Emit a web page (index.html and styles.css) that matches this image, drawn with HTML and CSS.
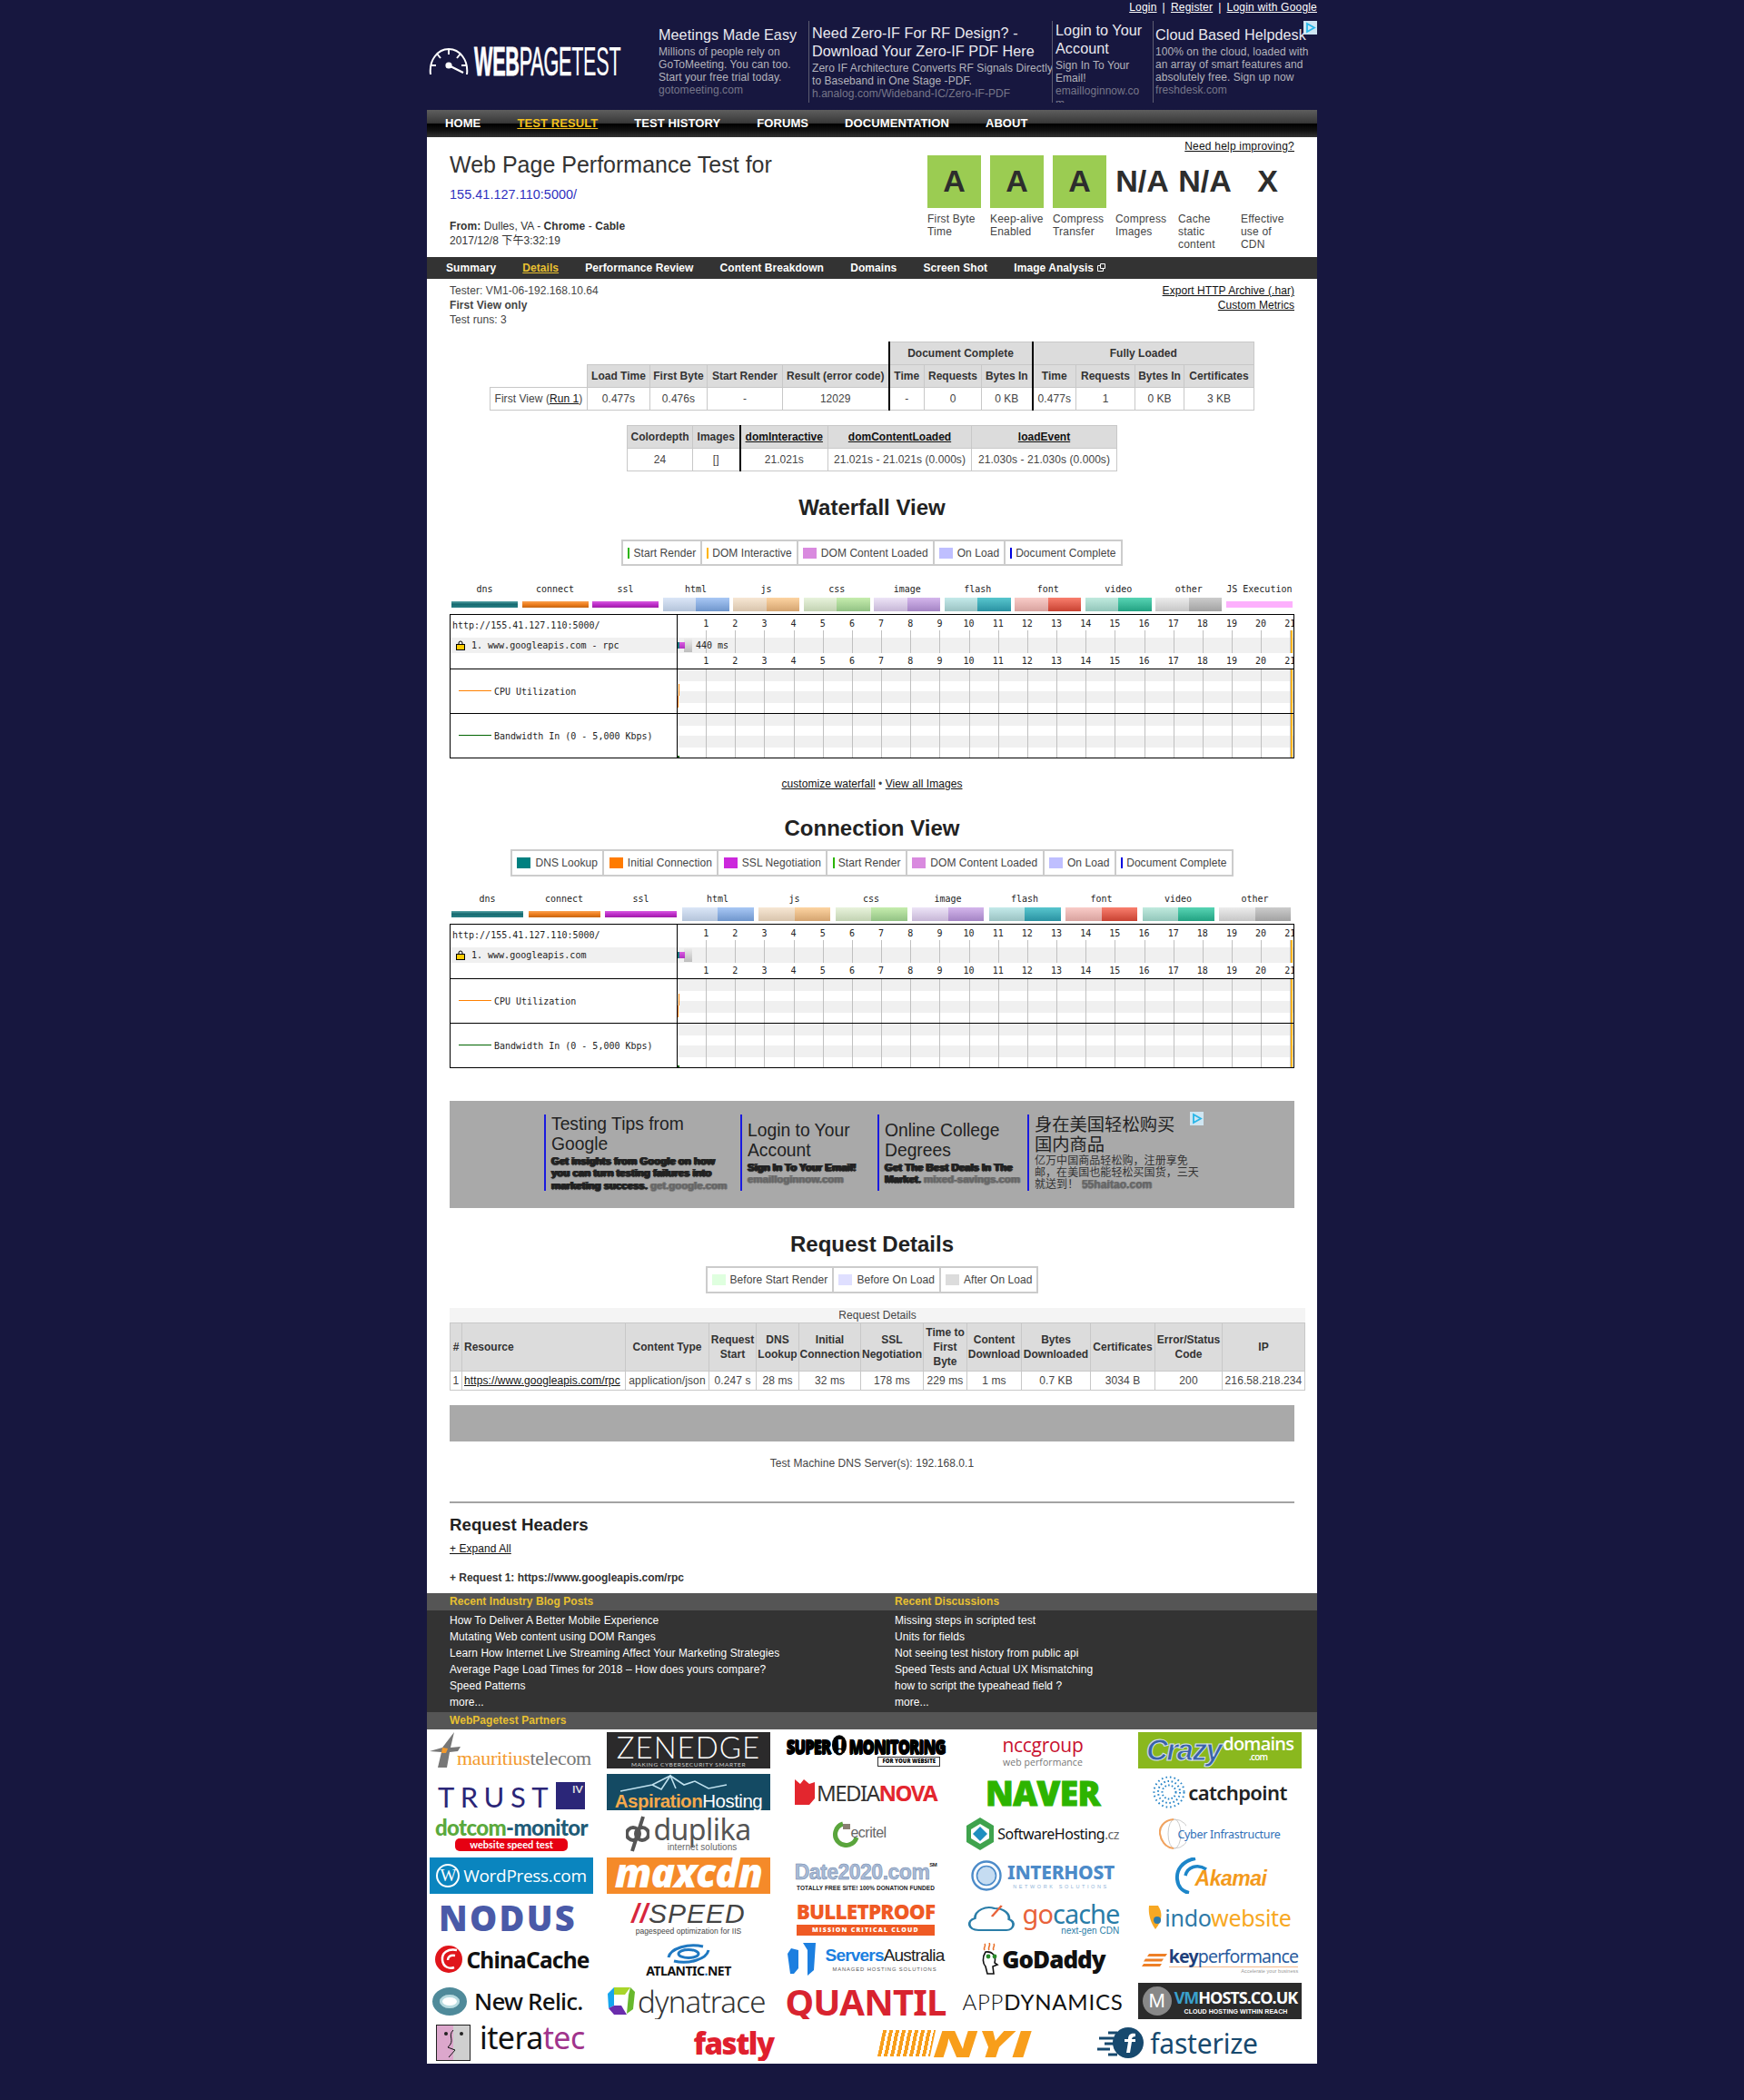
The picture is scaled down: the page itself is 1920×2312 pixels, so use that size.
FILE: index.html
```html
<!DOCTYPE html>
<html lang="en">
<head>
    <meta charset="UTF-8">
    <title>WebPagetest - Details</title>
    <link rel="stylesheet" href="styles.css">
    <script src="script.js" defer></script>
</head>
<body>
<div class="page">
    <div class="toplinks"><a>Login</a><span>|</span><a>Register</a><span>|</span><a>Login with Google</a></div>

    <div class="header">
        <div class="brand">
            <svg class="gauge" width="44" height="32" viewBox="0 0 44 32" fill="none" stroke="#fff" stroke-width="2">
                <path d="M2 30C0 14 10 2 22 2s22 12 20 28"/>
                <path d="M22 2v6M9 7l4 5M35 7l-4 5M2 20h6M36 20h6"/>
                <circle cx="22" cy="20" r="2.6" fill="#fff"/>
                <path d="M22 20l16 8" stroke-width="2.4"/>
            </svg>
            <div class="wordmark"><span class="wm-a">WEB</span><span class="wm-b">PAGE</span><span class="wm-c">TEST</span></div>
        </div>
        <div class="ad ad1">
            <div class="ad-title">Meetings Made Easy</div>
            <div class="ad-body">Millions of people rely on<br>GoToMeeting. You can too.<br>Start your free trial today.<br><span class="ad-url">gotomeeting.com</span></div>
        </div>
        <div class="ad ad2">
            <div class="ad-title">Need Zero-IF For RF Design? -<br>Download Your Zero-IF PDF Here</div>
            <div class="ad-body nowrap">Zero IF Architecture Converts RF Signals Directly<br>to Baseband in One Stage -PDF.<br><span class="ad-url">h.analog.com/Wideband-IC/Zero-IF-PDF</span></div>
        </div>
        <div class="ad ad3">
            <div class="ad-title">Login to Your<br>Account</div>
            <div class="ad-body">Sign In To Your<br>Email!<br><span class="ad-url">emailloginnow.co<br>m</span></div>
        </div>
        <div class="ad ad4">
            <div class="ad-title">Cloud Based Helpdesk</div>
            <div class="ad-body">100% on the cloud, loaded with<br>an array of smart features and<br>absolutely free. Sign up now<br><span class="ad-url">freshdesk.com</span></div>
        </div>
        <svg class="adchoice adchoice-top" width="15" height="15" viewBox="0 0 15 15"><rect width="15" height="15" fill="#cfe6f2"/><path d="M4 3l8 4.5L4 12z" fill="none" stroke="#29b6e8" stroke-width="1.8"/></svg>
    </div>

    <div class="nav">
        <a>HOME</a><a class="on">TEST RESULT</a><a>TEST HISTORY</a><a>FORUMS</a><a>DOCUMENTATION</a><a>ABOUT</a>
    </div>

    <div class="hero">
        <div class="hero-left">
            <h1>Web Page Performance Test for</h1>
            <div class="test-url">155.41.127.110:5000/</div>
            <div class="from"><b>From:</b> Dulles, VA - <b>Chrome</b> - <b>Cable</b></div>
            <div class="from">2017/12/8 下午3:32:19</div>
        </div>
        <div class="hero-right">
            <div class="help"><a>Need help improving?</a></div>
            <div class="grades">
                <div class="grade"><div class="mark pass">A</div><div class="mark-name">First Byte Time</div></div>
                <div class="grade"><div class="mark pass">A</div><div class="mark-name">Keep-alive Enabled</div></div>
                <div class="grade"><div class="mark pass">A</div><div class="mark-name">Compress Transfer</div></div>
                <div class="grade"><div class="mark">N/A</div><div class="mark-name">Compress Images</div></div>
                <div class="grade"><div class="mark">N/A</div><div class="mark-name">Cache<br>static<br>content</div></div>
                <div class="grade"><div class="mark">X</div><div class="mark-name">Effective<br>use of<br>CDN</div></div>
            </div>
        </div>
    </div>

    <div class="subnav">
        <a>Summary</a><a class="on">Details</a><a>Performance Review</a><a>Content Breakdown</a><a>Domains</a><a>Screen Shot</a>
        <a>Image Analysis <svg width="9" height="10" viewBox="0 0 9 10" fill="none" stroke="#fff"><path d="M3.5 1.5h5v5h-5zM3 3.5H.5v6h6V7"/></svg></a>
    </div>

    <div class="content">
        <div class="info">
            <div>Tester: VM1-06-192.168.10.64<br><b>First View only</b><br>Test runs: 3</div>
            <div class="info-right"><a>Export HTTP Archive (.har)</a><br><a>Custom Metrics</a></div>
        </div>

        <table class="data summary">
            <colgroup><col class="w107"><col class="w69"><col class="w63"><col class="w83"><col class="w117"><col class="w39"><col class="w63"><col class="w56"><col class="w48"><col class="w65"><col class="w54"><col class="w77"></colgroup>
            <tr><td class="blank" colspan="5"></td><th class="sep" colspan="3">Document Complete</th><th class="sep" colspan="4">Fully Loaded</th></tr>
            <tr><td class="blank"></td><th>Load Time</th><th>First Byte</th><th>Start Render</th><th>Result (error code)</th><th class="sep">Time</th><th>Requests</th><th>Bytes In</th><th class="sep">Time</th><th>Requests</th><th>Bytes In</th><th>Certificates</th></tr>
            <tr><td>First View (<a>Run 1</a>)</td><td>0.477s</td><td>0.476s</td><td>-</td><td>12029</td><td class="sep">-</td><td>0</td><td>0 KB</td><td class="sep">0.477s</td><td>1</td><td>0 KB</td><td>3 KB</td></tr>
        </table>

        <table class="data extra">
            <colgroup><col class="w72"><col class="w52"><col class="w97"><col class="w158"><col class="w160"></colgroup>
            <tr><th>Colordepth</th><th>Images</th><th class="sep"><a>domInteractive</a></th><th><a>domContentLoaded</a></th><th><a>loadEvent</a></th></tr>
            <tr><td>24</td><td>[]</td><td class="sep">21.021s</td><td>21.021s - 21.021s (0.000s)</td><td>21.030s - 21.030s (0.000s)</td></tr>
        </table>

        <h2 class="wf-title">Waterfall View</h2>
        <div class="legend wf-legend">
            <div><i class="line green"></i>Start Render</div>
            <div><i class="line amber"></i>DOM Interactive</div>
            <div><i class="swatch pink"></i>DOM Content Loaded</div>
            <div><i class="swatch lilac"></i>On Load</div>
            <div><i class="line blue"></i>Document Complete</div>
        </div>

        <div class="cats wf-cats">
            <div class="cat">dns<i class="thin dns"></i></div>
            <div class="cat">connect<i class="thin conn"></i></div>
            <div class="cat">ssl<i class="thin ssl"></i></div>
            <div class="cat">html<i class="pair"><u class="html-a"></u><u class="html-b"></u></i></div>
            <div class="cat">js<i class="pair"><u class="js-a"></u><u class="js-b"></u></i></div>
            <div class="cat">css<i class="pair"><u class="css-a"></u><u class="css-b"></u></i></div>
            <div class="cat">image<i class="pair"><u class="img-a"></u><u class="img-b"></u></i></div>
            <div class="cat">flash<i class="pair"><u class="fla-a"></u><u class="fla-b"></u></i></div>
            <div class="cat">font<i class="pair"><u class="fnt-a"></u><u class="fnt-b"></u></i></div>
            <div class="cat">video<i class="pair"><u class="vid-a"></u><u class="vid-b"></u></i></div>
            <div class="cat">other<i class="pair"><u class="oth-a"></u><u class="oth-b"></u></i></div>
            <div class="cat">JS Execution<i class="thin jsx"></i></div>
        </div>

        <div class="chart">
            <div class="row row-a"><div class="cell-l">http://155.41.127.110:5000/</div><div class="plot ticks top-ticks"></div></div>
            <div class="row row-b">
                <div class="cell-l req"><svg class="lock" width="10" height="11" viewBox="0 0 10 11"><path d="M3 5V3a2 2 0 0 1 4 0v2" fill="none" stroke="#000"/><rect x=".5" y="4.5" width="9" height="6" fill="#fc0" stroke="#000"/></svg>1. www.googleapis.com - rpc</div>
                <div class="plot grid-lines"><i class="b-dns"></i><i class="b-ssl"></i><i class="b-wait"></i><span class="time">440 ms</span></div>
            </div>
            <div class="row row-c"><div class="cell-l"></div><div class="plot ticks"></div></div>
            <div class="row row-d"><div class="cell-l metric"><i class="m-cpu"></i>CPU Utilization</div><div class="plot graph"><i class="cpu-1"></i><i class="cpu-2"></i></div></div>
            <div class="row row-d last"><div class="cell-l metric"><i class="m-bw"></i>Bandwidth In (0 - 5,000 Kbps)</div><div class="plot graph"><i class="bw-1"></i></div></div>
        </div>

        <div class="chart-links"><a>customize waterfall</a> • <a>View all Images</a></div>

        <h2 class="cv-title">Connection View</h2>
        <div class="legend cv-legend">
            <div><i class="swatch teal"></i>DNS Lookup</div>
            <div><i class="swatch orange"></i>Initial Connection</div>
            <div><i class="swatch magenta"></i>SSL Negotiation</div>
            <div><i class="line green"></i>Start Render</div>
            <div><i class="swatch pink"></i>DOM Content Loaded</div>
            <div><i class="swatch lilac"></i>On Load</div>
            <div><i class="line blue"></i>Document Complete</div>
        </div>

        <div class="cats cv-cats">
            <div class="cat">dns<i class="thin dns"></i></div>
            <div class="cat">connect<i class="thin conn"></i></div>
            <div class="cat">ssl<i class="thin ssl"></i></div>
            <div class="cat">html<i class="pair"><u class="html-a"></u><u class="html-b"></u></i></div>
            <div class="cat">js<i class="pair"><u class="js-a"></u><u class="js-b"></u></i></div>
            <div class="cat">css<i class="pair"><u class="css-a"></u><u class="css-b"></u></i></div>
            <div class="cat">image<i class="pair"><u class="img-a"></u><u class="img-b"></u></i></div>
            <div class="cat">flash<i class="pair"><u class="fla-a"></u><u class="fla-b"></u></i></div>
            <div class="cat">font<i class="pair"><u class="fnt-a"></u><u class="fnt-b"></u></i></div>
            <div class="cat">video<i class="pair"><u class="vid-a"></u><u class="vid-b"></u></i></div>
            <div class="cat">other<i class="pair"><u class="oth-a"></u><u class="oth-b"></u></i></div>
        </div>

        <div class="chart">
            <div class="row row-a"><div class="cell-l">http://155.41.127.110:5000/</div><div class="plot ticks top-ticks"></div></div>
            <div class="row row-b">
                <div class="cell-l req"><svg class="lock" width="10" height="11" viewBox="0 0 10 11"><path d="M3 5V3a2 2 0 0 1 4 0v2" fill="none" stroke="#000"/><rect x=".5" y="4.5" width="9" height="6" fill="#fc0" stroke="#000"/></svg>1. www.googleapis.com</div>
                <div class="plot grid-lines"><i class="b-dns"></i><i class="b-ssl"></i><i class="b-wait"></i></div>
            </div>
            <div class="row row-c"><div class="cell-l"></div><div class="plot ticks"></div></div>
            <div class="row row-d"><div class="cell-l metric"><i class="m-cpu"></i>CPU Utilization</div><div class="plot graph"><i class="cpu-1"></i><i class="cpu-2"></i></div></div>
            <div class="row row-d last"><div class="cell-l metric"><i class="m-bw"></i>Bandwidth In (0 - 5,000 Kbps)</div><div class="plot graph"><i class="bw-1"></i></div></div>
        </div>

        <div class="ad-box">
            <div class="box-ad w1">
                <div class="box-title">Testing Tips from<br>Google</div>
                <div class="box-body">Get insights from Google on how<br>you can turn testing failures into<br>marketing success. <span>get.google.com</span></div>
            </div>
            <div class="box-ad w2">
                <div class="box-title">Login to Your<br>Account</div>
                <div class="box-body">Sign In To Your Email!<br><span>emailloginnow.com</span></div>
            </div>
            <div class="box-ad w3">
                <div class="box-title">Online College<br>Degrees</div>
                <div class="box-body">Get The Best Deals In The<br>Market. <span>mixed-savings.com</span></div>
            </div>
            <div class="box-ad w4">
                <div class="box-title">身在美国轻松购买<br>国内商品</div>
                <div class="box-cjk">亿万中国商品轻松购，注册享免<br>邮，在美国也能轻松买国货，三天<br>就送到！ <b>55haitao.com</b></div>
            </div>
            <svg class="adchoice adchoice-box" width="15" height="15" viewBox="0 0 15 15"><rect width="15" height="15" fill="#cfe6f2"/><path d="M4 3l8 4.5L4 12z" fill="none" stroke="#29b6e8" stroke-width="1.8"/></svg>
        </div>

        <h2 class="rd-title">Request Details</h2>
        <div class="legend rd-legend">
            <div><i class="swatch mint"></i>Before Start Render</div>
            <div><i class="swatch pale"></i>Before On Load</div>
            <div><i class="swatch ash"></i>After On Load</div>
        </div>

        <table class="data requests">
            <caption>Request Details</caption>
            <colgroup><col class="w13"><col class="w180"><col class="w92"><col class="w52"><col class="w47"><col class="w68"><col class="w69"><col class="w48"><col class="w60"><col class="w76"><col class="w71"><col class="w74"><col class="w91"></colgroup>
            <tr class="tall"><th>#</th><th class="lft">Resource</th><th>Content Type</th><th>Request Start</th><th>DNS Lookup</th><th>Initial Connection</th><th>SSL Negotiation</th><th>Time to First Byte</th><th>Content Download</th><th>Bytes Downloaded</th><th>Certificates</th><th>Error/Status Code</th><th>IP</th></tr>
            <tr class="short"><td>1</td><td class="lft"><a>https://www.googleapis.com/rpc</a></td><td>application/json</td><td>0.247 s</td><td>28 ms</td><td>32 ms</td><td>178 ms</td><td>229 ms</td><td>1 ms</td><td>0.7 KB</td><td>3034 B</td><td>200</td><td>216.58.218.234</td></tr>
        </table>

        <div class="grey-bar"></div>
        <div class="dns-note">Test Machine DNS Server(s): 192.168.0.1</div>
        <hr class="rule">
        <h3>Request Headers</h3>
        <div class="expand"><a>+ Expand All</a></div>
        <div class="req-line">+ Request 1: https://www.googleapis.com/rpc</div>
    </div>

    <div class="foot-head"><div>Recent Industry Blog Posts</div><div>Recent Discussions</div></div>
    <div class="foot-body">
        <ul>
            <li>How To Deliver A Better Mobile Experience</li>
            <li>Mutating Web content using DOM Ranges</li>
            <li>Learn How Internet Live Streaming Affect Your Marketing Strategies</li>
            <li>Average Page Load Times for 2018 – How does yours compare?</li>
            <li>Speed Patterns</li>
            <li>more...</li>
        </ul>
        <ul>
            <li>Missing steps in scripted test</li>
            <li>Units for fields</li>
            <li>Not seeing test history from public api</li>
            <li>Speed Tests and Actual UX Mismatching</li>
            <li>how to script the typeahead field ?</li>
            <li>more...</li>
        </ul>
    </div>
    <div class="foot-head"><div>WebPagetest Partners</div></div>

    <div class="logos">
        <div class="logo maur"><svg width="40" height="40" viewBox="0 0 40 40"><path d="M27 0l-4 17 11-1-3 5-9 1-3 17H9l4-17L0 21l14-4z" fill="#777"/><path d="M14 17l6 1-2 5h-5z" fill="#f39a2d"/></svg><span><em>mauritius</em>telecom</span></div>
        <div class="logo zen"><span>ZENEDGE</span><small>MAKING CYBERSECURITY SMARTER</small></div>
        <div class="logo sup"><span>SUPER<b>!</b>MONITORING</span><small>FOR YOUR WEBSITE</small></div>
        <div class="logo ncc"><span>nccgroup</span><small>web performance</small></div>
        <div class="logo crazy"><span class="cz">Crazy</span><span class="dm">domains<small>.com</small></span></div>

        <div class="logo trust"><span>TRUST</span><b>IV</b></div>
        <div class="logo asp"><svg width="170" height="20" viewBox="0 0 170 20" fill="none" stroke="#bfe0ee" stroke-width="1.6"><path d="M10 19L45 12l20-10 15 10 12-4 15 8 20-4"/><path d="M45 12l10 5 10-15 6 14"/></svg><span><em>Aspiration</em>Hosting</span></div>
        <div class="logo media"><svg width="22" height="28" viewBox="0 0 22 28"><path d="M0 0l6 5 4-5 6 5 6-2v18l-6 7H0z" fill="#e3262e"/></svg><span>MEDIA<em>NOVA</em></span></div>
        <div class="logo naver">NAVER</div>
        <div class="logo catch"><svg width="36" height="36" viewBox="0 0 36 36" fill="none" stroke="#2a86c8" stroke-width="2"><circle cx="18" cy="18" r="16.5" stroke-dasharray="1.6 3"/><circle cx="18" cy="18" r="12" stroke-dasharray="1.6 2.6"/><circle cx="18" cy="18" r="7.5" stroke-dasharray="1.6 2.2"/></svg><span>catchpoint</span></div>

        <div class="logo dot"><span><em>dotcom</em>-monitor</span><small>website speed test</small></div>
        <div class="logo dup"><svg width="26" height="40" viewBox="0 0 26 40" fill="none" stroke="#555" stroke-width="4"><circle cx="8" cy="20" r="7"/><circle cx="18" cy="20" r="7"/><path d="M19 1L7 39"/></svg><div><span>duplika</span><small>internet solutions</small></div></div>
        <div class="logo ecr"><svg width="30" height="30" viewBox="0 0 30 30" fill="none"><path d="M12 4a12 12 0 1 0 15 15" stroke="#5aa53c" stroke-width="5"/><path d="M12 10h8v-6h-8z" fill="#8a7f72"/></svg><span>ecritel</span></div>
        <div class="logo soft"><svg width="30" height="36" viewBox="0 0 30 36"><path d="M15 0l15 9v18l-15 9L0 27V9z" fill="#3fa34d"/><path d="M15 7l10 6v10l-10 6-10-6V13z" fill="#fff"/><path d="M15 10l8 8-8 8-8-8z" fill="#1f8fbf"/></svg><span>SoftwareHosting<small>.cz</small></span></div>
        <div class="logo cyber"><svg width="30" height="36" viewBox="0 0 30 36" fill="none"><circle cx="17" cy="18" r="16" stroke="#ccc"/><ellipse cx="17" cy="18" rx="7" ry="16" stroke="#ccc"/><path d="M16 2C4 3 0 12 1 18s5 15 15 16" stroke="#f2a35e" stroke-width="2"/></svg><span>Cyber Infrastructure</span></div>

        <div class="logo wp"><i>W</i><span>WordPress.com</span></div>
        <div class="logo max">maxcdn</div>
        <div class="logo date"><span>Date2020.com<sup>SM</sup></span><small>TOTALLY FREE SITE! 100% DONATION FUNDED</small></div>
        <div class="logo inter"><svg width="34" height="36" viewBox="0 0 34 36" fill="none" stroke="#4c8bc9"><circle cx="17" cy="18" r="15.5" stroke-width="2.4"/><circle cx="17" cy="18" r="10.5" fill="#c5dcf2" stroke-width="1.6"/></svg><div><span>INTERHOST</span><small>NETWORK SOLUTIONS</small></div></div>
        <div class="logo aka"><svg width="38" height="40" viewBox="0 0 38 40" fill="none" stroke="#1d86c9"><path d="M24 1C9 4 3 14 4 24s8 14 13 15" stroke-width="4"/><path d="M36 13C26 6 15 11 13 20" stroke-width="3.5"/></svg><span>Akamai</span></div>

        <div class="logo nodus">NODUS</div>
        <div class="logo speed"><span><em>//</em>SPEED</span><small>pagespeed optimization for IIS</small></div>
        <div class="logo bullet"><span>BULLETPROOF</span><small>MISSION CRITICAL CLOUD</small></div>
        <div class="logo go"><svg width="56" height="32" viewBox="0 0 42 32" preserveAspectRatio="none" fill="none"><path d="M10 30C1 30 0 19 7 17 7 8 16 3 23 6c8 0 13 6 12 12 6 3 4 12-2 12z" stroke="#2a7da8" stroke-width="2"/><path d="M21 15l8-12" stroke="#e8623a" stroke-width="2"/></svg><div><span><em>go</em>cache</span><small>next-gen CDN</small></div></div>
        <div class="logo indo"><svg width="16" height="26" viewBox="0 0 16 26"><path d="M1 0h10c5 8 5 16-3 26C2 18 0 8 1 0z" fill="#f7a823"/><circle cx="10" cy="16" r="4" fill="#2e7aa8"/></svg><span><em>indo</em>website</span></div>

        <div class="logo china"><svg width="34" height="32" viewBox="0 0 30 32" fill="none"><circle cx="15" cy="16" r="15" fill="#e0151b"/><path d="M24 6C14 4 7 9 8 17s8 10 13 8M22 12c-6-1-8 2-8 5" stroke="#fff" stroke-width="2.5"/></svg><span>ChinaCache</span></div>
        <div class="logo atl"><svg width="56" height="24" viewBox="0 0 56 24" fill="none" stroke="#1f78c1" stroke-width="3"><path d="M6 16C8 6 28 0 44 4M50 8C48 18 28 24 12 20"/><ellipse cx="28" cy="12" rx="11" ry="4.5"/></svg><span>ATLANTIC<em>.</em>NET</span></div>
        <div class="logo serv"><svg width="32" height="36" viewBox="0 0 32 36"><path d="M4 6l8 2v20l-5 6H3L0 12z M17 0h14l-2 30-7 6V8z" fill="#1c7fe0"/></svg><div><span><em>Servers</em>Australia</span><small>MANAGED HOSTING SOLUTIONS</small></div></div>
        <div class="logo god"><svg width="24" height="36" viewBox="0 0 24 36" fill="none"><path d="M5 1c2 3-2 4 0 7M10 0c2 3-2 5 0 8M15 1c2 3-2 4 0 7" stroke="#e8702a" stroke-width="1.6"/><path d="M6 10c8-1 12 5 10 12l3 2-5 2 1 8H8l-2-8c-3-3-4-10 0-16z" fill="#fff" stroke="#111" stroke-width="1.6"/><circle cx="9" cy="15" r="2.4" fill="#2a8a2a"/><circle cx="16" cy="15" r="2.4" fill="#2a8a2a"/></svg><span>GoDaddy</span></div>
        <div class="logo key"><svg width="28" height="14" viewBox="0 0 28 14"><path d="M8 0h20l-2 3H6zM4 5.500h20l-2 3H2zM2 11h20l-2 3H0z" fill="#ee7f26"/></svg><div><span><b>key</b>performance</span><small>Accelerate your business</small></div></div>

        <div class="logo relic"><i></i><span>New Relic.</span></div>
        <div class="logo dyna"><svg width="32" height="32" viewBox="0 0 32 32"><path d="M8 1h18L20 9H8z" fill="#a8d52a"/><path d="M26 1l5 5-2 19-7 5 2-21z" fill="#68b82c"/><path d="M8 1L1 8l1 16 6-3z" fill="#15a5ee"/><path d="M2 24l6 7h14l-6-10H8z" fill="#6a2dac"/></svg><span>dynatrace</span></div>
        <div class="logo quant">QUANTIL</div>
        <div class="logo app">APP<b>DYNAMICS</b></div>
        <div class="logo vm"><i>M</i><div><span><em>VM</em>HOSTS.CO.UK</span><small>CLOUD HOSTING WITHIN REACH</small></div></div>

        <div class="logo-last">
            <div class="logo iter"><svg width="38" height="40" viewBox="0 0 38 40"><rect x=".5" y=".5" width="37" height="39" fill="#cfcfcf" stroke="#222"/><rect x="1" y="1" width="18" height="38" fill="#dca7cc"/><path d="M19 6C12 13 22 17 13 25l8 3-7 8" fill="none" stroke="#111"/><circle cx="11" cy="10" r="2" fill="#222"/><circle cx="28" cy="10" r="2" fill="#222"/></svg><span>itera<em>tec</em></span></div>
            <div class="logo fast">fastly</div>
            <div class="logo nyi"><i></i><span>NYI</span></div>
            <div class="logo fz"><svg width="54" height="34" viewBox="0 0 54 34"><circle cx="34" cy="17" r="17" fill="#17496e"/><path d="M2 12h16M8 18h12M0 24h14M12 6h10M12 30h10" stroke="#17496e" stroke-width="3"/><path d="M42 7c-6-1-8 2-8 6h-4v3h4l-2 12h4l2-12h4v-3h-4c0-2 2-3 4-3z" fill="#fff"/></svg><span>fasterize</span></div>
        </div>
    </div>
</div>
</body>
</html>
```

FILE: styles.css
```css
body{
    margin: 0;
    background-color: #17173f;
    font-family: "Liberation Sans", Arial, "Noto Sans CJK SC", sans-serif;
    font-size: 12px;
    letter-spacing: .06px;
    color: #444;
}
a{
    color: #111;
    text-decoration: underline;
}
h1,h2,h3{
    margin: 0;
    color: #222;
}
.page{
    width: 980px;
    margin: 0 auto 40px;
}

/* top of page */
.toplinks{
    height: 23px;
    line-height: 16px;
    text-align: right;
    color: #fff;
    letter-spacing: .2px;
}
.toplinks a{
    color: #fff;
}
.toplinks span{
    margin: 0 6px;
}
.header{
    position: relative;
    display: flex;
    height: 98px;
    color: #b4b4bc;
}
.brand{
    flex: none;
    width: 255px;
    display: flex;
    align-items: flex-start;
    padding: 28px 0 0 2px;
    box-sizing: border-box;
}
.gauge{
    flex: none;
    margin: 1px 6px 0 0;
}
.wordmark{
    flex: none;
    width: 161px;
    color: #fff;
    font-size: 45px;
    line-height: 34px;
    white-space: nowrap;
    transform: scaleX(.48);
    transform-origin: left top;
    letter-spacing: -.5px;
}
.wm-a{
    font-weight: bold;
    -webkit-text-stroke: .8px #fff;
}
.wm-b{
    -webkit-text-stroke: .7px #fff;
}
.ad{
    height: 90px;
    box-sizing: border-box;
    overflow: hidden;
}
.ad-title{
    font-size: 16.2px;
    line-height: 20px;
    color: #e9e9ef;
}
.ad-body{
    margin-top: 2px;
    line-height: 14px;
}
.nowrap{
    white-space: nowrap;
}
.ad-url{
    color: #77778a;
}
.ad1{
    width: 165px;
    padding-top: 5px;
}
.ad2,.ad3,.ad4{
    border-left: 1px solid #5c5c70;
    padding-left: 3px;
}
.ad2{
    width: 268px;
    padding-top: 3px;
}
.ad3{
    width: 111px;
    padding-top: 0;
}
.ad4{
    width: 181px;
    padding-top: 5px;
    padding-left: 2px;
}
.ad4 .ad-title{
    white-space: nowrap;
}
.adchoice{
    position: absolute;
}
.adchoice-top{
    top: 0;
    right: 0;
}
.nav{
    height: 30px;
    display: flex;
    gap: 40px;
    padding-left: 20px;
    background: linear-gradient(180deg, #5e5e5e 0, #383838 48%, #000 52%, #111 75%, #333 100%);
    font-size: 13px;
    font-weight: bold;
    line-height: 30px;
    letter-spacing: .09px;
}
.nav a{
    color: #fff;
    text-decoration: none;
}
.nav a.on{
    color: #f4c21f;
    text-decoration: underline;
}

/* result summary */
.hero{
    height: 132px;
    display: flex;
    justify-content: space-between;
    padding: 0 25px;
    background: #fff;
}
.hero h1{
    margin-top: 15px;
    font-size: 25px;
    line-height: 30px;
    font-weight: normal;
    white-space: nowrap;
    color: #333;
    letter-spacing: 0;
}
.test-url{
    margin-top: 8px;
    font-size: 14.4px;
    line-height: 20px;
    color: #3030c0;
}
.from{
    line-height: 16px;
    color: #333;
}
.test-url + .from{
    margin-top: 17px;
}
.hero-right{
    width: 404px;
}
.help{
    margin-top: 2px;
    line-height: 16px;
    text-align: right;
    letter-spacing: .2px;
}
.grades{
    margin-top: 2px;
    display: grid;
    grid-template-columns: repeat(6, 59px);
    column-gap: 10px;
}
.mark{
    height: 58px;
    display: flex;
    align-items: center;
    justify-content: center;
    padding-bottom: 2px;
    box-sizing: border-box;
    font-size: 34px;
    font-weight: bold;
    color: #2d2d2d;
    white-space: nowrap;
}
.mark.pass{
    background: #9bcc52;
}
.mark-name{
    margin-top: 5px;
    line-height: 14px;
    color: #444;
    letter-spacing: .2px;
}
.subnav{
    height: 24px;
    display: flex;
    gap: 29.2px;
    padding-left: 21px;
    background: #333;
    font-weight: bold;
    line-height: 24px;
}
.subnav a{
    color: #fff;
    text-decoration: none;
}
.subnav a.on{
    color: #e8c030;
    text-decoration: underline;
}

/* main column */
.content{
    padding: 5px 25px 9px;
    background: #fff;
}
.info{
    display: flex;
    justify-content: space-between;
    line-height: 16px;
}
.info-right{
    text-align: right;
}
table.data{
    table-layout: fixed;
    border-collapse: collapse;
    margin: 16px auto 0;
    color: #444;
}
.data th,.data td{
    height: 24px;
    padding: 0;
    border: 1px solid #c8c8c8;
    text-align: center;
    white-space: nowrap;
    overflow: hidden;
}
.data th{
    background: #dcdcdc;
    color: #333;
    letter-spacing: 0;
}
.data .blank{
    border: none;
    background: none;
}
.data .sep{
    border-left: 2px solid #000;
}
.summary{
    width: 841px;
}
.extra{
    width: 539px;
}
.w107{width:107px}.w69{width:69px}.w63{width:63px}.w83{width:83px}.w117{width:117px}
.w39{width:39px}.w56{width:56px}.w48{width:48px}.w65{width:65px}.w54{width:54px}.w77{width:77px}
.w72{width:72px}.w52{width:52px}.w97{width:97px}.w158{width:158px}.w160{width:160px}
.w13{width:13px}.w180{width:180px}.w92{width:92px}.w47{width:47px}.w68{width:68px}
.w60{width:60px}.w76{width:76px}.w71{width:71px}.w74{width:74px}.w91{width:91px}
h2{
    font-size: 24px;
    line-height: 28px;
    text-align: center;
    letter-spacing: 0;
}
.wf-title{
    margin-top: 26px;
    margin-bottom: -1px;
}
.cv-title{
    margin-top: 27px;
    margin-bottom: -1px;
}
.rd-title{
    margin-top: 26px;
    margin-bottom: -1px;
}

/* legends */
.legend{
    width: fit-content;
    margin: 0 auto;
    display: flex;
    border: 2px solid #ccc;
    color: #444;
}
.legend > div{
    display: flex;
    align-items: center;
    gap: 4px;
    height: 25px;
    padding: 0 5px;
    white-space: nowrap;
}
.legend > div + div{
    border-left: 2px solid #ccc;
}
.wf-legend{
    margin-top: 22px;
}
.cv-legend{
    margin-top: 10px;
}
.cv-legend > div,.rd-legend > div{
    height: 26px;
}
.cv-legend > div{
    padding: 0 5.4px;
}
.rd-legend{
    margin-top: 11px;
}
.line{
    width: 2px;
    height: 12px;
}
.swatch{
    width: 15px;
    height: 12px;
    margin-right: 1px;
}
.green{background:#2bb500}
.amber{background:#ffb400}
.blue{background:#0000e0}
.pink{background:#d98adf}
.lilac{background:#bfbfff}
.teal{background:#008080}
.orange{background:#ff7b00}
.magenta{background:#cc28dc}
.mint{background:#dfffdf}
.pale{background:#dfdfff}
.ash{background:#dcdcdc}

/* request type key */
.cats{
    display: flex;
    font-family: "DejaVu Sans Mono", monospace;
    font-size: 10px;
    line-height: 14px;
    letter-spacing: 0;
    color: #222;
    justify-content: space-between;
    padding: 0 2px;
    height: 31px;
}
.wf-cats{
    margin-top: 19px;
    margin-bottom: 3px;
}
.cv-cats{
    margin-top: 18px;
    margin-bottom: 3px;
}
.wf-cats .cat{
    width: 73px;
}
.cv-cats{
    padding-right: 4px;
}
.cv-cats .cat{
    width: 79px;
}
.cat{
    text-align: center;
    white-space: nowrap;
}
.cat i{
    display: flex;
    margin-top: 2px;
}
.cat i.thin{
    height: 7px;
    margin-top: 6px;
}
.cat .pair{
    height: 15px;
}
.pair u{
    flex: 1;
}
.dns{background:linear-gradient(#5aa4a8,#156a70 45%,#2a8086)}
.conn{background:linear-gradient(#f9a354,#f08020 45%,#c66510)}
.ssl{background:linear-gradient(#d85ce0,#c030cc 45%,#a01ca8)}
.jsx{background:#fdb0fd}
.html-a{background:linear-gradient(#dbe6f7,#b4c4da)}
.html-b{background:linear-gradient(#a9c8f5,#6f96cc)}
.js-a{background:linear-gradient(#f7e7d4,#d8c4ac)}
.js-b{background:linear-gradient(#fdd4a2,#d4a470)}
.css-a{background:linear-gradient(#e8f3dc,#c2d2b2)}
.css-b{background:linear-gradient(#c6edae,#92c284)}
.img-a{background:linear-gradient(#ede4f7,#c6b6d6)}
.img-b{background:linear-gradient(#d4b6ec,#a484c4)}
.fla-a{background:linear-gradient(#c4eaea,#9ac2c2)}
.fla-b{background:linear-gradient(#58c6ce,#2a92a2)}
.fnt-a{background:linear-gradient(#f9ccc8,#d8a29e)}
.fnt-b{background:linear-gradient(#f97f6e,#c84232)}
.vid-a{background:linear-gradient(#c0eade,#92c6ba)}
.vid-b{background:linear-gradient(#58d4b4,#22a282)}
.oth-a{background:linear-gradient(#ececec,#c6c6c6)}
.oth-b{background:linear-gradient(#cccccc,#a2a2a2)}

/* waterfall charts */
.chart{
    border: 1px solid #000;
    font-family: "DejaVu Sans Mono", monospace;
    font-size: 10px;
    letter-spacing: 0;
    color: #222;
}
.row{
    display: grid;
    grid-template-columns: 250px 1fr;
    overflow: hidden;
}
.cell-l{
    padding-left: 2px;
    border-right: 1px solid #000;
    white-space: nowrap;
}
.plot{
    --tick-lines: repeating-linear-gradient(90deg, transparent 0 31.16px, #c0c0c0 31.16px 32.16px);
    --end-line: linear-gradient(#ffb31a, #ffb31a);
    position: relative;
}
.row-a{
    height: 25px;
}
.row-a .cell-l{
    line-height: 24px;
}
.row-b{
    height: 17px;
    background: #f0f0f0;
}
.row-c{
    height: 17px;
    border-bottom: 1px solid #000;
    box-sizing: content-box;
}
.ticks{
    display: flex;
    overflow: hidden;
    padding-left: 15.08px;
    line-height: 17px;
}
.ticks span{
    flex: 0 0 32.16px;
    text-align: center;
}
.top-ticks{
    line-height: 19px;
    background: var(--end-line) right 1px bottom / 2px 8px no-repeat, var(--tick-lines) left bottom / 100% 8px no-repeat;
}
.grid-lines{
    background: var(--end-line) right 1px top / 2px 100% no-repeat, var(--tick-lines);
}
.req{
    display: flex;
    align-items: center;
    line-height: 17px;
}
.lock{
    margin: 0 7px 0 4px;
}
.b-dns,.b-ssl,.b-wait,.time,.cpu-1,.cpu-2,.bw-1{
    position: absolute;
}
.b-dns{
    left: 0;
    top: 5px;
    width: 2px;
    height: 7px;
    background: #1a7a80;
}
.b-ssl{
    left: 2px;
    top: 5px;
    width: 6px;
    height: 7px;
    background: linear-gradient(#d85ce0,#b030c0);
}
.b-wait{
    left: 7px;
    top: 1px;
    width: 9px;
    height: 15px;
    background: linear-gradient(#ececec,#bdbdbd);
}
.b-ssl{
    z-index: 1;
}
.time{
    left: 20px;
    top: 0;
    line-height: 17px;
}
.row-d{
    height: 48px;
    border-bottom: 1px solid #000;
}
.row-d.last{
    border-bottom: none;
}
.metric{
    display: flex;
    align-items: center;
    padding-left: 9px;
}
.metric i{
    width: 36px;
    height: 1px;
    margin: -2px 3px 0 0;
}
.m-cpu{
    background: #ff8000;
}
.m-bw{
    background: #006400;
}
.graph{
    background:
        var(--end-line) right 1px top / 2px 100% no-repeat,
        var(--tick-lines),
        linear-gradient(180deg, #f0f0f0 0 13px, #fff 13px 24px, #f0f0f0 24px 37px, #fff 37px);
}
.cpu-1{
    left: 1px;
    top: 16px;
    width: 1px;
    height: 13px;
    background: #ff8000;
}
.cpu-2{
    left: 0;
    top: 29px;
    width: 1px;
    height: 13px;
    background: #ff8000;
}
.bw-1{
    left: 0;
    bottom: 0;
    width: 2px;
    height: 2px;
    background: #006400;
}
.chart-links{
    margin-top: 20px;
    line-height: 16px;
    text-align: center;
}

/* ad strip in the middle */
.ad-box{
    position: relative;
    margin-top: 36px;
    height: 118px;
    box-sizing: border-box;
    display: flex;
    padding: 15px 0 0 104px;
    background: #a9a9a9;
}
.box-ad{
    height: 84px;
    box-sizing: border-box;
    border-left: 2px solid #1a1ae0;
    padding-left: 6px;
    display: flex;
    flex-direction: column;
    justify-content: center;
    color: #222;
    white-space: nowrap;
}
.w1{width:216px}
.w2{width:151px}
.w3{width:165px}
.w4{width:190px}
.box-title{
    font-size: 19.3px;
    line-height: 22px;
    letter-spacing: 0;
}
.box-body{
    font-weight: bold;
    font-size: 11.6px;
    line-height: 13.500px;
    letter-spacing: -.1px;
    text-shadow: 1px 0 0 #222, -1px 0 0 #222, 0 1px 1px #222;
}
.box-body span{
    color: #666;
    text-shadow: 1px 0 0 #777, -1px 0 0 #777, 0 1px 1px #777;
}
.box-cjk{
    line-height: 13px;
    color: #333;
}
.box-cjk b{
    color: #666;
    text-shadow: 1px 0 0 #777, 0 1px 1px #777;
}
.adchoice-box{
    left: 815px;
    top: 12px;
}

/* request table */
table.requests{
    width: 941px;
    margin: 16px 0 0;
}
.requests caption{
    height: 16px;
    line-height: 16px;
    background: #f4f4f4;
    color: #444;
}
.requests th,.requests td{
    line-height: 16px;
    white-space: normal;
}
.requests .tall th{
    height: 52px;
}
.requests .short td{
    height: 20px;
    white-space: nowrap;
    letter-spacing: .1px;
}
.requests th:first-child,.requests td:first-child{
    text-align: center;
}
.requests .lft{
    text-align: left;
    padding-left: 2px;
}
.grey-bar{
    margin-top: 16px;
    height: 40px;
    background: #a9a9a9;
}
.dns-note{
    margin-top: 16px;
    line-height: 16px;
    text-align: center;
}
.rule{
    margin: 34px 0 0;
    height: 2px;
    border: none;
    background: #a3a3a3;
}
h3{
    margin-top: 12px;
    font-size: 18.7px;
    line-height: 24px;
    letter-spacing: 0;
}
.expand{
    margin-top: 6px;
    line-height: 16px;
}
.req-line{
    margin-top: 16px;
    line-height: 16px;
    font-weight: bold;
    letter-spacing: -.03px;
    color: #333;
}

/* footer */
.foot-head{
    height: 19px;
    display: grid;
    padding-left: 25px;
    grid-template-columns: 490px 1fr;
    background: #555;
    color: #e8c030;
    font-weight: bold;
    line-height: 19px;
}
.foot-body{
    height: 108px;
    padding: 2px 0 2px 25px;
    display: grid;
    grid-template-columns: 490px 1fr;
    background: #333;
    color: #fff;
}
.foot-body ul{
    margin: 0;
    padding: 0;
    list-style: none;
    line-height: 18px;
}

/* partner logos */
.logos{
    display: grid;
    grid-template-columns: repeat(5, 180px);
    grid-auto-rows: 40px;
    gap: 6px 15px;
    padding: 3px 0 3px 3px;
    background: #fff;
}
.logo-last{
    grid-column: 1 / -1;
    display: flex;
    gap: 64.5px;
}
.logo{
    width: 180px;
    height: 40px;
    flex: none;
    display: flex;
    align-items: center;
    justify-content: center;
    overflow: hidden;
    white-space: nowrap;
    color: #111;
    box-sizing: border-box;
}
.logo em{
    font-style: normal;
}
.logo small{
    display: block;
    text-align: center;
}
.maur{
    justify-content: flex-start;
    align-items: flex-end;
    font-family: "Liberation Serif", serif;
    font-size: 22px;
    line-height: 22px;
    color: #777;
}
.maur span{
    margin-left: -10px;
    letter-spacing: -.3px;
}
.maur em{
    color: #f39a2d;
}
.zen,.sup,.ncc,.dot,.date,.speed,.bullet{
    flex-direction: column;
}
.zen{
    background: #2b2a2b;
    color: #fff;
    font-family: "Lato", sans-serif;
    font-weight: 300;
    font-size: 33px;
    line-height: 32px;
    letter-spacing: 1px;
}
.zen small{
    font-size: 6.5px;
    line-height: 8px;
    letter-spacing: .6px;
    color: #ccc;
    font-weight: 400;
}
.sup{
    font-family: "Open Sans", sans-serif;
    font-weight: 800;
    font-size: 16.500px;
    line-height: 24px;
    color: #000;
    letter-spacing: -.8px;
    text-shadow: 1px 1px 0 #000, 0 2px 0 #000;
    align-items: center;
}
.sup span{
    display: inline-block;
    transform: scaleY(1.3);
}
.sup b{
    display: inline-block;
    margin: 0 2px;
    padding: 0 6px;
    border-radius: 10px;
    background: #000;
    color: #fff;
    line-height: 17px;
}
.sup small{
    font-size: 6px;
    line-height: 9px;
    letter-spacing: 0;
    text-shadow: none;
    border: 1px solid #333;
    padding: 0 4px;
    align-self: flex-end;
    margin-right: 8px;
}
.ncc{
    font-family: "Open Sans", sans-serif;
    color: #c8102e;
}
.ncc span{
    font-size: 21px;
    line-height: 25px;
    letter-spacing: -.3px;
}
.ncc small{
    font-size: 10.5px;
    line-height: 12px;
    color: #777;
}
.crazy{
    background: #8ab81e;
    font-family: "Liberation Sans", sans-serif;
    gap: 2px;
}
.cz{
    font-size: 33px;
    font-weight: bold;
    font-style: italic;
    color: #3a62a8;
    letter-spacing: -1.5px;
    -webkit-text-stroke: 1px #d7e0f0;
}
.dm{
    color: #fff;
    font-size: 20px;
    line-height: 19px;
    font-family: "Open Sans", sans-serif;
    font-weight: 600;
    margin-top: -6px;
    letter-spacing: -.8px;
}
.dm small{
    font-size: 10px;
    line-height: 10px;
}
.trust{
    align-items: flex-end;
    gap: 2px;
    color: #2b2678;
    font-family: "Lato", sans-serif;
}
.trust span{
    font-size: 31px;
    line-height: 30px;
    letter-spacing: 6.5px;
}
.trust b{
    width: 32px;
    height: 30px;
    margin-bottom: 1px;
    background: #2b2678;
    color: #ddd;
    font-size: 12px;
    text-align: right;
    padding-right: 2px;
    box-sizing: border-box;
}
.asp{
    flex-direction: column;
    justify-content: flex-start;
    background: #144a63;
    color: #fff;
    font-family: "Liberation Sans", sans-serif;
    font-size: 20.5px;
    line-height: 20px;
    letter-spacing: -.5px;
}
.asp em{
    color: #f4a94c;
    font-weight: bold;
}
.media{
    gap: 2px;
    font-family: "Noto Sans", sans-serif;
    font-size: 24px;
    letter-spacing: -1.5px;
    color: #333;
}
.media em{
    color: #e3262e;
    font-weight: bold;
}
.naver{
    font-family: "Open Sans", sans-serif;
    font-weight: 800;
    font-size: 37px;
    color: #2db400;
    letter-spacing: -.5px;
    -webkit-text-stroke: 1px #2db400;
}
.catch{
    gap: 3px;
    font-family: "Noto Sans", sans-serif;
    font-weight: 600;
    font-size: 22px;
    letter-spacing: -.6px;
    color: #222;
}
.dot{
    font-family: "Lato", sans-serif;
    font-weight: 900;
    font-size: 24px;
    line-height: 24px;
    color: #1f5c78;
    letter-spacing: -.6px;
}
.dot em{
    color: #5aa93c;
}
.dot small{
    width: 124px;
    height: 14px;
    border-radius: 5px;
    background: #e60012;
    color: #fff;
    font-size: 11px;
    line-height: 14px;
    font-weight: 700;
    letter-spacing: 0;
}
.dup{
    gap: 4px;
}
.dup span{
    display: block;
    font-family: "Noto Sans", sans-serif;
    font-size: 32px;
    line-height: 30px;
    color: #555;
    letter-spacing: -.5px;
}
.dup small{
    font-size: 10px;
    line-height: 10px;
    color: #666;
}
.ecr{
    font-family: "Liberation Sans", sans-serif;
    color: #666;
    font-size: 16px;
    letter-spacing: -.5px;
    padding-right: 14px;
}
.ecr span{
    margin: 0 0 2px -10px;
}
.soft{
    gap: 4px;
    font-family: "Noto Sans", sans-serif;
    font-size: 16px;
    letter-spacing: -.5px;
}
.soft small{
    display: inline;
    color: #666;
    font-size: 14px;
}
.cyber{
    font-family: "Noto Sans", sans-serif;
    font-size: 12.500px;
    letter-spacing: -.3px;
    color: #2f6fb7;
    gap: 0;
}
.cyber span{
    margin-left: -10px;
}
.wp{
    background: #0a85bf;
    color: #fff;
    font-family: "Open Sans", sans-serif;
    font-size: 19px;
    gap: 4px;
    letter-spacing: -.3px;
}
.wp i{
    width: 22px;
    height: 22px;
    border: 2px solid #fff;
    border-radius: 50%;
    font-style: normal;
    font-family: "Liberation Serif", serif;
    font-size: 19px;
    line-height: 22px;
    text-align: center;
    box-sizing: content-box;
}
.max{
    background: #f58a29;
    color: #fff;
    font-family: "Open Sans", sans-serif;
    font-weight: 800;
    font-style: italic;
    font-size: 44px;
    line-height: 40px;
    letter-spacing: -1px;
    padding-bottom: 8px;
}
.date{
    font-family: "Liberation Sans", sans-serif;
}
.date span{
    font-size: 23px;
    line-height: 26px;
    color: #a9bbd6;
    font-weight: bold;
    -webkit-text-stroke: .5px #6b83a8;
    letter-spacing: -.5px;
}
.date sup{
    font-size: 6px;
    color: #222;
    -webkit-text-stroke: 0;
    vertical-align: 14px;
    line-height: 0;
}
.date small{
    font-size: 6.5px;
    line-height: 9px;
    font-weight: bold;
    color: #222;
}
.inter{
    gap: 6px;
    color: #4c8bc9;
}
.inter span{
    display: block;
    font-family: "Noto Sans", sans-serif;
    font-weight: 800;
    font-size: 21px;
    line-height: 24px;
    letter-spacing: -.3px;
}
.inter small{
    font-size: 5.5px;
    line-height: 8px;
    letter-spacing: 2.6px;
    color: #8fb4d8;
}
.aka{
    color: #f39a1c;
    font-weight: bold;
    font-style: italic;
    font-size: 23px;
    gap: 0;
    align-items: flex-end;
    letter-spacing: -.5px;
}
.aka span{
    margin: 0 0 3px -14px;
}
.nodus{
    font-family: "Open Sans", sans-serif;
    font-weight: 800;
    font-size: 38px;
    color: #4a5aa8;
    letter-spacing: 2.3px;
    padding-right: 8px;
}
.speed{
    font-family: "Liberation Sans", sans-serif;
    font-style: italic;
    color: #444;
}
.speed span{
    font-size: 30px;
    line-height: 29px;
    letter-spacing: 1px;
}
.speed em{
    color: #d7263d;
    font-style: italic;
    font-weight: bold;
}
.speed small{
    font-style: normal;
    font-size: 8.500px;
    line-height: 10px;
    color: #444;
}
.bullet{
    color: #ef5a24;
    font-family: "Open Sans", sans-serif;
    font-weight: 800;
}
.bullet span{
    font-size: 22.5px;
    line-height: 28px;
    letter-spacing: -.8px;
}
.bullet small{
    width: 152px;
    background: #ef5a24;
    color: #fff;
    font-size: 7px;
    line-height: 12px;
    letter-spacing: 1.2px;
}
.go{
    gap: 6px;
    color: #2a7da8;
}
.go span{
    display: block;
    font-family: "Noto Sans", sans-serif;
    font-size: 29px;
    line-height: 29px;
    letter-spacing: -1px;
}
.go em{
    color: #e8623a;
}
.go small{
    text-align: right;
    font-size: 10px;
    line-height: 10px;
}
.indo{
    gap: 2px;
    font-family: "Noto Sans", sans-serif;
    font-size: 25px;
    letter-spacing: -.3px;
    color: #f7a823;
}
.indo em{
    color: #2e7aa8;
}
.china{
    gap: 2px;
    font-family: "Noto Sans", sans-serif;
    font-weight: 700;
    font-size: 24.500px;
    letter-spacing: -.8px;
}
.atl{
    flex-direction: column;
    font-family: "Noto Sans", sans-serif;
    font-weight: 700;
    font-size: 14px;
    line-height: 13px;
    letter-spacing: -.5px;
}
.atl em{
    color: #1f78c1;
}
.serv{
    gap: 10px;
}
.serv span{
    display: block;
    font-family: "Liberation Sans", sans-serif;
    font-size: 19px;
    line-height: 22px;
    letter-spacing: -.8px;
    color: #222;
}
.serv em{
    color: #1c7fe0;
    font-weight: bold;
}
.serv small{
    font-size: 5.800px;
    line-height: 8px;
    letter-spacing: .9px;
    color: #555;
}
.god{
    font-family: "Open Sans", sans-serif;
    font-weight: 800;
    font-size: 26px;
    letter-spacing: -1px;
    gap: 0;
}
.key{
    gap: 2px;
    align-items: flex-start;
    padding-top: 6px;
}
.key svg{
    margin-top: 8px;
}
.key span{
    display: block;
    font-family: "Noto Sans", sans-serif;
    font-size: 19.500px;
    line-height: 22px;
    letter-spacing: -.8px;
    color: #2b5c9e;
    border-bottom: 1px solid #f5b98a;
}
.key b{
    color: #1f3f7a;
}
.key small{
    text-align: right;
    font-size: 5.500px;
    line-height: 8px;
    color: #999;
}
.relic{
    gap: 8px;
    font-family: "Noto Sans", sans-serif;
    font-size: 26px;
    letter-spacing: -.8px;
    font-weight: 500;
    justify-content: flex-start;
    padding-left: 3px;
}
.relic i{
    flex: none;
    box-sizing: border-box;
    width: 38px;
    height: 31px;
    border: 8px solid #4f8a9a;
    border-radius: 50%;
    background: #fff;
    box-shadow: inset 0 0 0 3px #b7dbe0;
}
.dyna{
    font-family: "Noto Sans", sans-serif;
    font-size: 33px;
    font-weight: 300;
    color: #333;
    letter-spacing: -.8px;
    justify-content: flex-start;
    gap: 2px;
}
.quant{
    font-family: "Noto Sans", sans-serif;
    font-weight: 700;
    font-size: 40px;
    letter-spacing: -.8px;
    color: #d8232f;
}
.app{
    font-family: "Lato", sans-serif;
    font-weight: 300;
    font-size: 24px;
    letter-spacing: .8px;
}
.app b{
    font-weight: 400;
}
.vm{
    background: #2b2b2b;
    color: #fff;
    gap: 3px;
}
.vm i{
    width: 32px;
    height: 32px;
    border-radius: 50%;
    background: #888;
    font-style: normal;
    text-align: center;
    font-size: 22px;
    line-height: 32px;
    font-weight: 300;
    flex: none;
}
.vm span{
    display: block;
    font-family: "Open Sans", sans-serif;
    font-weight: 700;
    font-size: 18px;
    line-height: 24px;
    letter-spacing: -1px;
}
.vm em{
    color: #3aa0cc;
}
.vm small{
    font-size: 7px;
    line-height: 8px;
    font-weight: bold;
}
.iter{
    justify-content: flex-start;
    padding-left: 7px;
    gap: 10px;
    font-family: "Noto Sans", sans-serif;
    font-size: 34px;
    line-height: 38px;
    color: #111;
    align-items: flex-start;
}
.iter span{
    margin-top: -5px;
    letter-spacing: -.6px;
}
.iter em{
    color: #a0348c;
}
.fast{
    font-family: "Open Sans", sans-serif;
    font-weight: 800;
    font-size: 33px;
    color: #e0202e;
    letter-spacing: -1.5px;
}
.nyi{
    color: #f89e1b;
    font-family: "Open Sans", sans-serif;
    font-weight: 800;
    font-style: italic;
    font-size: 40px;
    justify-content: flex-start;
    padding-left: 7px;
}
.nyi i{
    flex: none;
    width: 58px;
    height: 29px;
    transform: skewX(-12deg);
    background: repeating-linear-gradient(90deg, #f89e1b 0 4px, transparent 4px 7px);
}
.nyi span{
    flex: none;
    width: 108px;
    transform: scaleX(1.55);
    transform-origin: left center;
}
.fz{
    gap: 4px;
    font-family: "Noto Sans", sans-serif;
    font-size: 30px;
    color: #17496e;
    letter-spacing: -.2px;
}
```

FILE: script.js
```js
// fill the time scale rows of both charts
document.querySelectorAll(".ticks").forEach(function(row){
    for(let i = 1; i <= 21; i++){
        let num = document.createElement("span");
        num.textContent = i;
        row.appendChild(num);
    }
});
```
